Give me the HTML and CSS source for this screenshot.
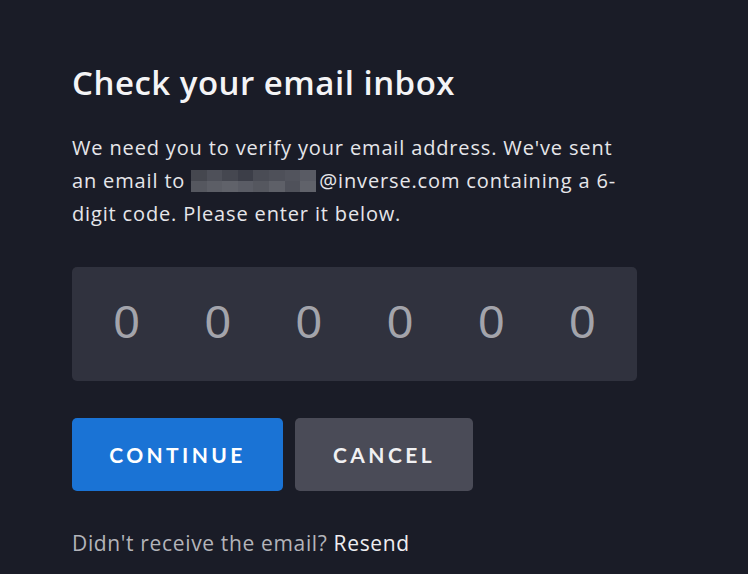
FILE: index.html
```html
<!DOCTYPE html>
<html lang="en">
<head>
<meta charset="utf-8">
<title>Check your email inbox</title>
<link rel="stylesheet" href="styles.css">
</head>
<body>
<main class="panel">
  <h1 class="title">Check your email inbox</h1>
  <p class="intro">We need you to verify your email address. We've sent an email to <span class="redacted" aria-hidden="true"></span>@inverse.com containing a 6-digit code. Please enter it below.</p>
  <div class="code">
    <span class="digit">0</span>
    <span class="digit">0</span>
    <span class="digit">0</span>
    <span class="digit">0</span>
    <span class="digit">0</span>
    <span class="digit">0</span>
  </div>
  <div class="actions">
    <button class="btn btn-primary">CONTINUE</button>
    <button class="btn btn-secondary">CANCEL</button>
  </div>
  <p class="resend">Didn't receive the email? <a class="resend-link" href="#">Resend</a></p>
</main>
</body>
</html>
```

FILE: styles.css
```css
html, body {
  margin: 0;
  padding: 0;
  background: #1a1c27;
}
body {
  font-family: "Open Sans", Lato, sans-serif;
  color: #ececf0;
  height: 574px;
  overflow: hidden;
}
.panel {
  width: 566px;
  padding: 61px 0 0 72px;
}
.title {
  margin: 0;
  font-size: 33px;
  font-weight: 600;
  line-height: 44px;
  color: #f4f4f6;
  letter-spacing: 0.5px;
}
.intro {
  margin: 26px 0 0;
  width: 556px;
  font-size: 20px;
  line-height: 33px;
  letter-spacing: 0.85px;
  color: #e6e6ea;
}
.redacted {
  display: inline-block;
  width: 125px;
  height: 22px;
  vertical-align: -4px;
  margin-right: 3px;
  background:
    linear-gradient(90deg, #45474f 0 16px, #4e5059 16px 31px, #454750 31px 47px, #3c3e48 47px 62px, #4a4c55 62px 78px, #4e5059 78px 94px, #52545d 94px 109px, #595b64 109px 125px) top left / 100% 11px no-repeat,
    linear-gradient(90deg, #55575f 0 16px, #5c5e66 16px 31px, #60626a 31px 47px, #5a5c65 47px 62px, #55575f 62px 78px, #5e6068 78px 94px, #4f515a 94px 109px, #60626a 109px 125px) bottom left / 100% 11px no-repeat;
}
.code {
  margin-top: 37px;
  width: 547px;
  height: 114px;
  padding: 0 9px;
  background: #30323e;
  border-radius: 5px;
  display: grid;
  grid-template-columns: repeat(6, 1fr);
  align-items: center;
  justify-items: center;
}
.digit {
  font-family: "Liberation Sans", Arial, sans-serif;
  font-size: 47px;
  font-weight: 400;
  color: #a3a4ab;
  line-height: 1;
  margin-bottom: 6px;
}
.actions {
  margin-top: 37px;
  display: flex;
  gap: 12px;
}
.btn {
  height: 73px;
  border: none;
  border-radius: 5px;
  font-family: Lato, "Open Sans", sans-serif;
  font-size: 21px;
  font-weight: 700;
  letter-spacing: 3.4px;
  color: #ffffff;
  cursor: pointer;
  padding: 0;
}
.btn-primary {
  width: 211px;
  background: #1a73d5;
}
.btn-secondary {
  width: 178px;
  background: #4a4b57;
  color: #f0f0f2;
}
.resend {
  margin: 38px 0 0;
  font-size: 21px;
  letter-spacing: 0.65px;
  color: #b3b4ba;
}
.resend-link {
  color: #eeeef1;
  text-decoration: none;
}
```
